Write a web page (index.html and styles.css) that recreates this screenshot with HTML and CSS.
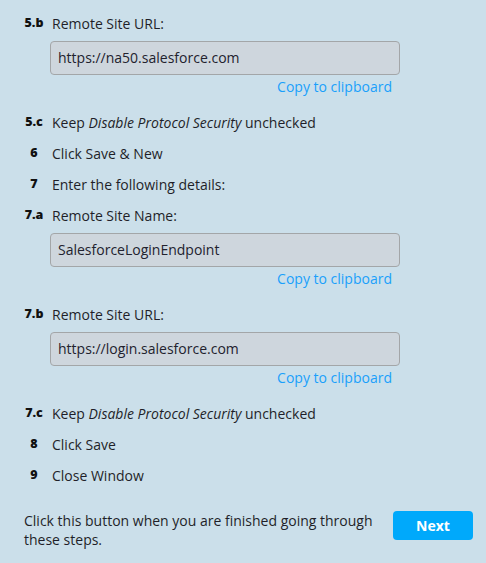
FILE: index.html
```html
<!DOCTYPE html>
<html>
<head>
<meta charset="utf-8">
<link rel="stylesheet" href="styles.css">
</head>
<body>
<div class="steps">
  <div class="step">
    <div class="num">5.b</div>
    <div class="body">
      <div class="text">Remote Site URL:</div>
      <div class="field">
        <div class="input">https://na50.salesforce.com</div>
        <a class="copy">Copy to clipboard</a>
      </div>
    </div>
  </div>
  <div class="step">
    <div class="num">5.c</div>
    <div class="body"><div class="text">Keep <em>Disable Protocol Security</em> unchecked</div></div>
  </div>
  <div class="step">
    <div class="num">6</div>
    <div class="body"><div class="text">Click Save &amp; New</div></div>
  </div>
  <div class="step">
    <div class="num">7</div>
    <div class="body"><div class="text">Enter the following details:</div></div>
  </div>
  <div class="step">
    <div class="num">7.a</div>
    <div class="body">
      <div class="text">Remote Site Name:</div>
      <div class="field">
        <div class="input">SalesforceLoginEndpoint</div>
        <a class="copy">Copy to clipboard</a>
      </div>
    </div>
  </div>
  <div class="step">
    <div class="num">7.b</div>
    <div class="body">
      <div class="text">Remote Site URL:</div>
      <div class="field">
        <div class="input">https://login.salesforce.com</div>
        <a class="copy">Copy to clipboard</a>
      </div>
    </div>
  </div>
  <div class="step">
    <div class="num">7.c</div>
    <div class="body"><div class="text">Keep <em>Disable Protocol Security</em> unchecked</div></div>
  </div>
  <div class="step">
    <div class="num">8</div>
    <div class="body"><div class="text">Click Save</div></div>
  </div>
  <div class="step">
    <div class="num">9</div>
    <div class="body"><div class="text">Close Window</div></div>
  </div>
</div>
<div class="footer">
  <p class="note">Click this button when you are finished going through these steps.</p>
  <button class="next">Next</button>
</div>
</body>
</html>
```
FILE: styles.css
```css
html, body {
  margin: 0;
  padding: 0;
  background: #cbdfea;
}
body {
  font-family: "Open Sans", "DejaVu Sans", sans-serif;
  font-size: 14px;
  color: #1f1f29;
  padding: 14px 13px 0 20px;
}
.steps {
  display: flex;
  flex-direction: column;
  gap: 11px;
}
.step {
  display: grid;
  grid-template-columns: 28px 1fr;
  column-gap: 4px;
  align-items: start;
}
.num {
  font-size: 12.5px;
  font-weight: 800;
  line-height: 17px;
  text-align: center;
  color: #111;
}
.text {
  line-height: 20px;
}
.text em {
  font-style: italic;
}
.field {
  width: 350px;
  margin: 7px 0 5px -2px;
  display: flex;
  flex-direction: column;
}
.input {
  box-sizing: border-box;
  height: 34px;
  padding: 0 7px;
  border: 1px solid #a3a6a8;
  border-radius: 4px;
  background: #ced6dd;
  line-height: 32px;
  color: #22222e;
}
.copy {
  align-self: flex-end;
  margin-top: 2px;
  padding-right: 8px;
  line-height: 20px;
  color: #1a9ffb;
  cursor: pointer;
}
.footer {
  display: flex;
  align-items: flex-start;
  gap: 14px;
  margin-top: 25px;
  padding-left: 4px;
}
.note {
  margin: 0;
  width: 355px;
  line-height: 19px;
}
.next {
  width: 80px;
  height: 29px;
  border: none;
  border-radius: 4px;
  background: #00a9fb;
  color: #fff;
  font-family: "Open Sans", "DejaVu Sans", sans-serif;
  font-size: 14px;
  font-weight: 700;
  padding: 0;
}
```
